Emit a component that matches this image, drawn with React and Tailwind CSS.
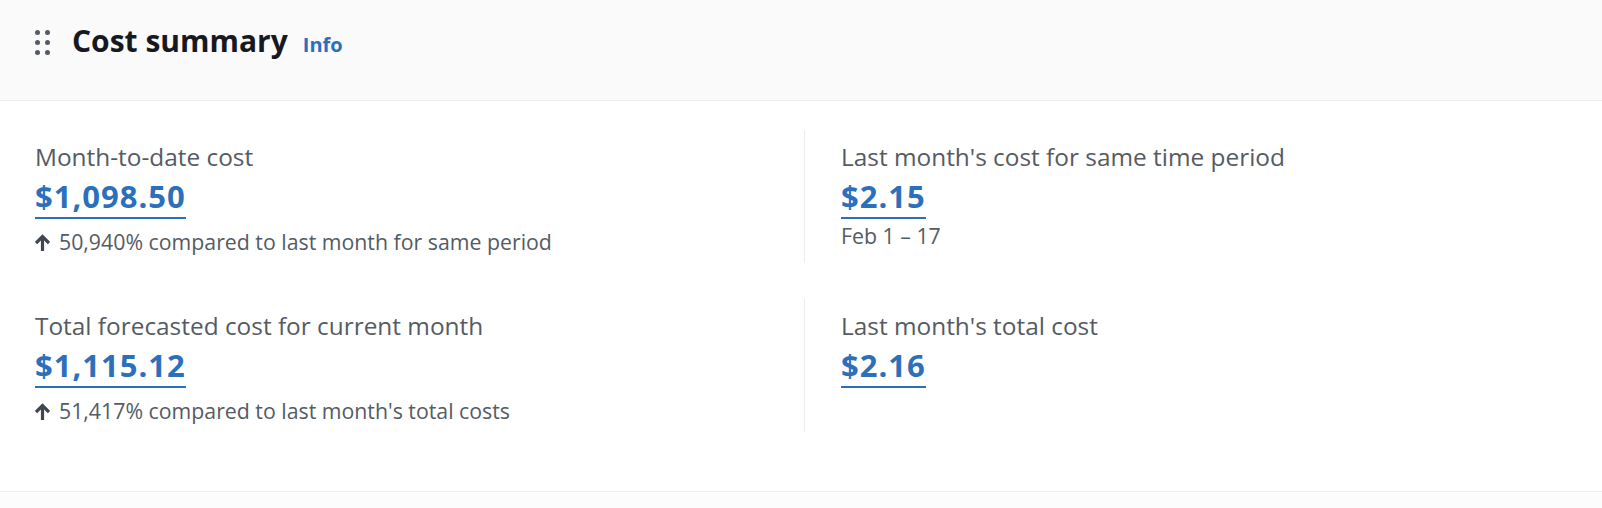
import React from "react";

const metrics = [
  {
    label: "Month-to-date cost",
    value: "$1,098.50",
    note: "50,940% compared to last month for same period",
    up: true,
  },
  {
    label: "Last month's cost for same time period",
    value: "$2.15",
    note: "Feb 1 – 17",
  },
  {
    label: "Total forecasted cost for current month",
    value: "$1,115.12",
    note: "51,417% compared to last month's total costs",
    up: true,
  },
  {
    label: "Last month's total cost",
    value: "$2.16",
  },
];

const DragHandle = () => (
  <svg width="15" height="25" viewBox="0 0 15 25" className="mt-[2px] shrink-0">
    {[2.5, 12.5, 22.5].map((cy) => (
      <g key={cy} fill="#545b64">
        <circle cx="2.5" cy={cy} r="2.5" />
        <circle cx="12.5" cy={cy} r="2.5" />
      </g>
    ))}
  </svg>
);

const ArrowUp = () => (
  <svg width="15" height="17" viewBox="0 0 15 17" className="shrink-0">
    <path
      d="M7.5 17V3M1 9L7.5 2.5L14 9"
      fill="none"
      stroke="#414750"
      strokeWidth="3.2"
      strokeLinejoin="miter"
    />
  </svg>
);

const Metric = ({ label, value, note, up, divided }) => (
  <div
    className={`h-[133px] pt-[11px] ${
      divided ? "border-l border-[#eaeded] pl-[36px]" : "pl-[35px]"
    }`}
  >
    <div className="text-[24.4px] leading-[32px] text-[#545b64]">{label}</div>
    <div className="mt-[3px] flex">
      <a
        href="#"
        className="border-b-2 border-[#2c6fba] text-[31px] font-bold leading-[41px] tracking-[1px] text-[#2c6fba]"
      >
        {value}
      </a>
    </div>
    {note &&
      (up ? (
        <div className="mt-[9px] flex items-center gap-[9px] text-[21.3px] leading-[28px] text-[#545b64]">
          <ArrowUp />
          <span>{note}</span>
        </div>
      ) : (
        <div className="mt-[3px] text-[21.3px] leading-[28px] text-[#545b64]">
          {note}
        </div>
      ))}
  </div>
);

export default function App() {
  return (
    <div className="min-h-screen w-full bg-[#fcfcfc] font-['Open_Sans',sans-serif]">
      <div className="border-b border-[#eaeded] bg-white">
        {/* Header */}
        <div className="h-[101px] border-b border-[#eaeded] bg-[#fafafa] pl-[35px] pt-[23px]">
          <div className="flex items-center gap-[22px]">
            <DragHandle />
            <div className="flex items-baseline">
              <h2 className="text-[30px] font-bold leading-[36px] text-[#16191f]">
                Cost summary
              </h2>
              <a
                href="#"
                className="ml-[15px] text-[20px] font-bold leading-[28px] text-[#2c6fba]"
              >
                Info
              </a>
            </div>
          </div>
        </div>

        {/* Metrics */}
        <div className="grid grid-cols-[804px_1fr] gap-y-[36px] pt-[29px] pb-[59px]">
          {metrics.map((m, i) => (
            <Metric key={m.label} {...m} divided={i % 2 === 1} />
          ))}
        </div>
      </div>
    </div>
  );
}
